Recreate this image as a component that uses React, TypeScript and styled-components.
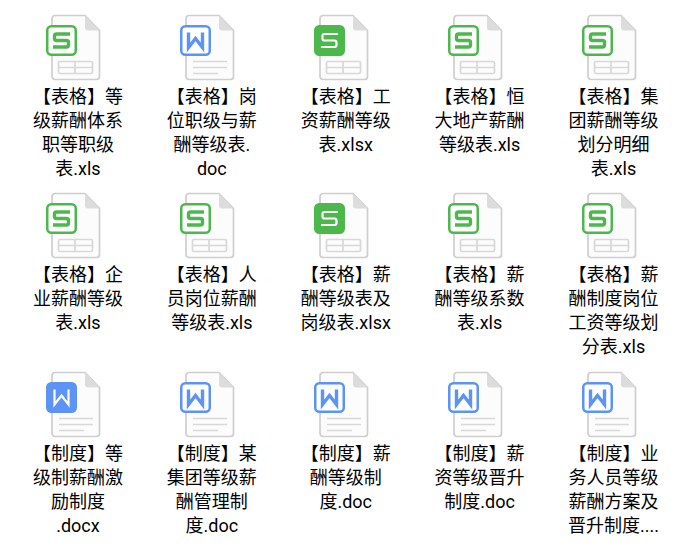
import React from 'react';
import styled, { createGlobalStyle } from 'styled-components';

const GlobalStyle = createGlobalStyle`
  html, body {
    margin: 0;
    padding: 0;
    background: #fff;
  }
`;

const Grid = styled.div`
  display: grid;
  grid-template-columns: repeat(5, 133.9px);
  grid-auto-rows: 178.4px;
  padding: 14px 0 0 11px;
  font-family: 'Roboto', 'Noto Sans CJK SC', sans-serif;
`;

const Item = styled.div`
  display: flex;
  flex-direction: column;
  align-items: center;
`;

const IconSvg = styled.svg`
  display: block;
  width: 56px;
  height: 68px;
  margin-left: -8px;
  flex: none;
`;

const Label = styled.div`
  width: 92px;
  margin-top: 3px;
  font-size: 18px;
  line-height: 24px;
  color: #000;
  text-align: center;
  display: -webkit-box;
  -webkit-box-orient: vertical;
  -webkit-line-clamp: 4;
  overflow: hidden;
`;

type Kind = 's' | 'w';

const colors: Record<Kind, string> = { s: '#4cb84c', w: '#5c94f5' };

const FileIcon = ({ kind, solid }: { kind: Kind; solid?: boolean }) => {
  const color = colors[kind];
  const mark = solid ? '#fff' : color;
  return (
    <IconSvg viewBox="0 0 56 68">
      <path
        d="M9 1.5H39L53.5 16.5V62.5a3 3 0 0 1-3 3H9a3 3 0 0 1-3-3V4.5a3 3 0 0 1 3-3Z"
        fill="#fcfcfc"
        stroke="#cecece"
        strokeWidth="1.7"
      />
      <path d="M39 1.5L53.5 16.5H42a3 3 0 0 1-3-3Z" fill="#dcdcdc" />
      {kind === 's' ? (
        <g fill="none" stroke="#d8d8d8" strokeWidth="1.7">
          <rect x="12.5" y="47.5" width="34" height="12" rx="1.5" />
          <path d="M12.5 53.5H46.5M29 47.5V59.5" />
        </g>
      ) : (
        <path d="M13 47.5H47M13 53.5H47M13 59.5H38" stroke="#d8d8d8" strokeWidth="1.7" fill="none" />
      )}
      <rect
        x="1.25"
        y="12.25"
        width="28.5"
        height="28.5"
        rx="4"
        fill={solid ? color : '#fff'}
        stroke={color}
        strokeWidth="2.5"
      />
      {kind === 's' ? (
        <path
          d="M24 20H10.5Q8.5 20 8.5 22V24.5Q8.5 26.5 10.5 26.5H20.5Q22.5 26.5 22.5 28.5V31Q22.5 33 20.5 33H7"
          fill="none"
          stroke={mark}
          strokeWidth={solid ? 2.2 : 3.4}
        />
      ) : (
        <path d="M8.5 18.5V33.5L15.5 24.5L22.5 33.5V18.5" fill="none" stroke={mark} strokeWidth={solid ? 2.2 : 3.4} />
      )}
    </IconSvg>
  );
};

const files: { name: string; kind: Kind; solid?: boolean }[] = [
  { name: '【表格】等级薪酬体系职等职级表.xls', kind: 's' },
  { name: '【表格】岗位职级与薪酬等级表.\u200Bdoc', kind: 'w' },
  { name: '【表格】工资薪酬等级表.xlsx', kind: 's', solid: true },
  { name: '【表格】恒大地产薪酬等级表.xls', kind: 's' },
  { name: '【表格】集团薪酬等级划分明细表.xls', kind: 's' },
  { name: '【表格】企业薪酬等级表.xls', kind: 's' },
  { name: '【表格】人员岗位薪酬等级表.xls', kind: 's' },
  { name: '【表格】薪酬等级表及岗级表.xlsx', kind: 's', solid: true },
  { name: '【表格】薪酬等级系数表.xls', kind: 's' },
  { name: '【表格】薪酬制度岗位工资等级划分表.xls', kind: 's' },
  { name: '【制度】等级制薪酬激励制度\u200B.docx', kind: 'w', solid: true },
  { name: '【制度】某集团等级薪酬管理制度.doc', kind: 'w' },
  { name: '【制度】薪酬等级制度.doc', kind: 'w' },
  { name: '【制度】薪资等级晋升制度.doc', kind: 'w' },
  { name: '【制度】业务人员等级薪酬方案及晋升制度....', kind: 'w' },
];

export default function App() {
  return (
    <>
      <GlobalStyle />
      <Grid>
        {files.map((f) => (
          <Item key={f.name}>
            <FileIcon kind={f.kind} solid={f.solid} />
            <Label>{f.name}</Label>
          </Item>
        ))}
      </Grid>
    </>
  );
}
